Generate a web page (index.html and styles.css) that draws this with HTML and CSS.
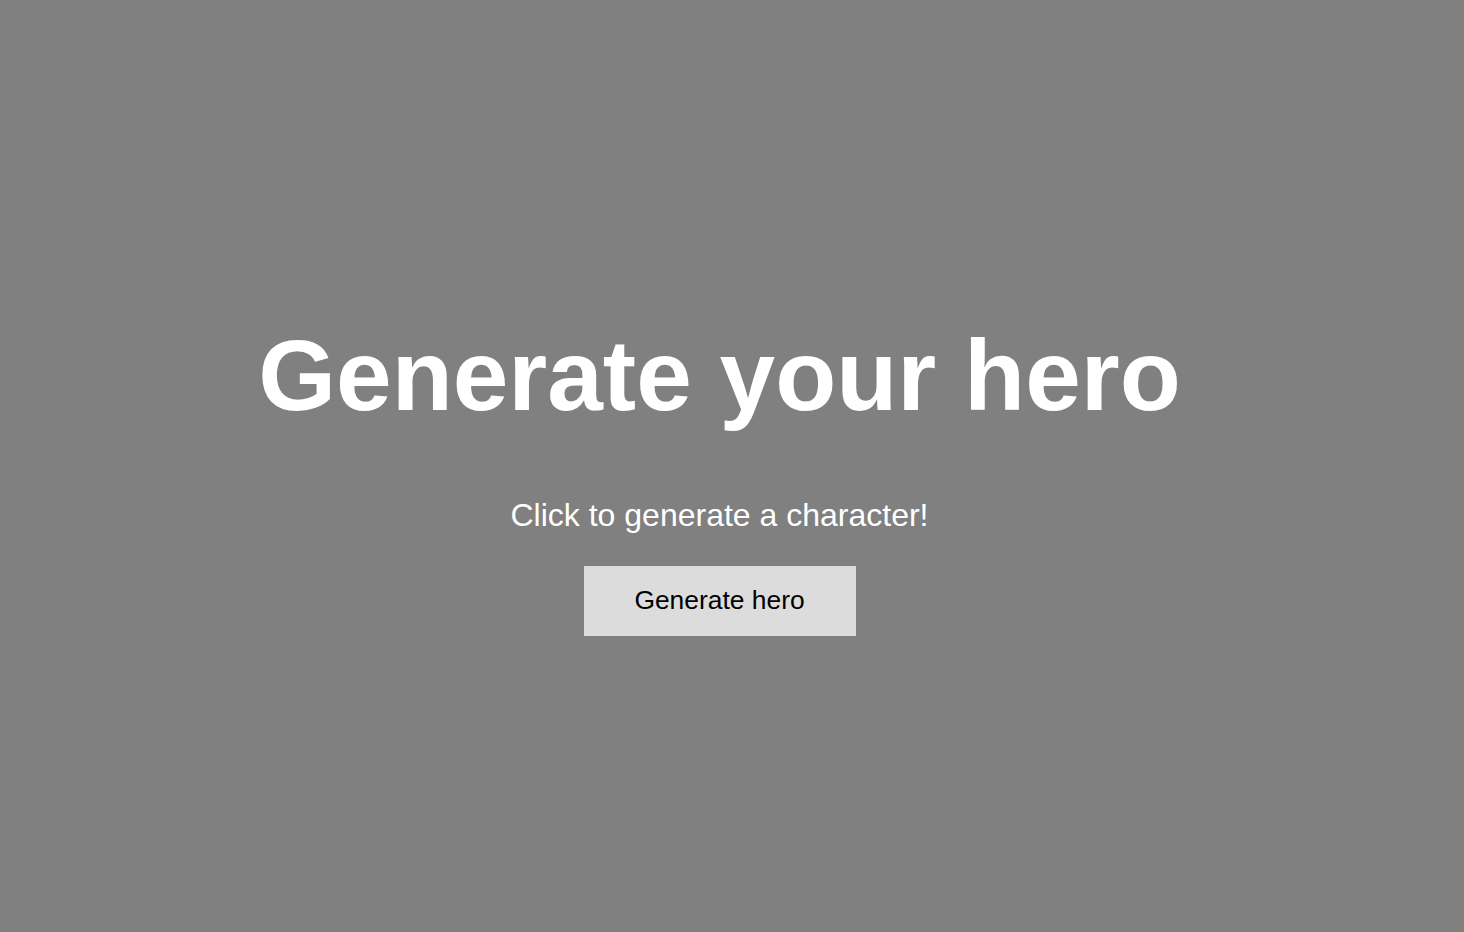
FILE: index.html
```html
<!DOCTYPE html>
<html lang="en">
<head>
<meta charset="utf-8">
<title>Generate your hero</title>
<link rel="stylesheet" href="styles.css">
</head>
<body>
<main class="hero">
  <h1 class="hero-title">Generate your hero</h1>
  <p class="hero-sub">Click to generate a character!</p>
  <button class="hero-btn" type="button">Generate hero</button>
</main>
</body>
</html>
```

FILE: styles.css
```css
html, body {
  margin: 0;
  padding: 0;
  background: #808080;
  font-family: "Liberation Sans", Arial, sans-serif;
}

.hero {
  box-sizing: border-box;
  min-height: 100vh;
  padding: 22px 25px 0 0;
  display: flex;
  flex-direction: column;
  align-items: center;
  justify-content: center;
  color: #fff;
}

.hero-title {
  margin: 0;
  font-size: 100px;
  line-height: 115px;
  font-weight: 700;
}

.hero-sub {
  margin: 63.5px 0 0;
  font-size: 32px;
  line-height: 36.8px;
}

.hero-btn {
  margin-top: 32.7px;
  width: 272px;
  height: 70px;
  border: none;
  background: #dcdcdc;
  color: #000;
  font-family: "Liberation Sans", Arial, sans-serif;
  font-size: 26.4px;
  padding: 0;
}
```
